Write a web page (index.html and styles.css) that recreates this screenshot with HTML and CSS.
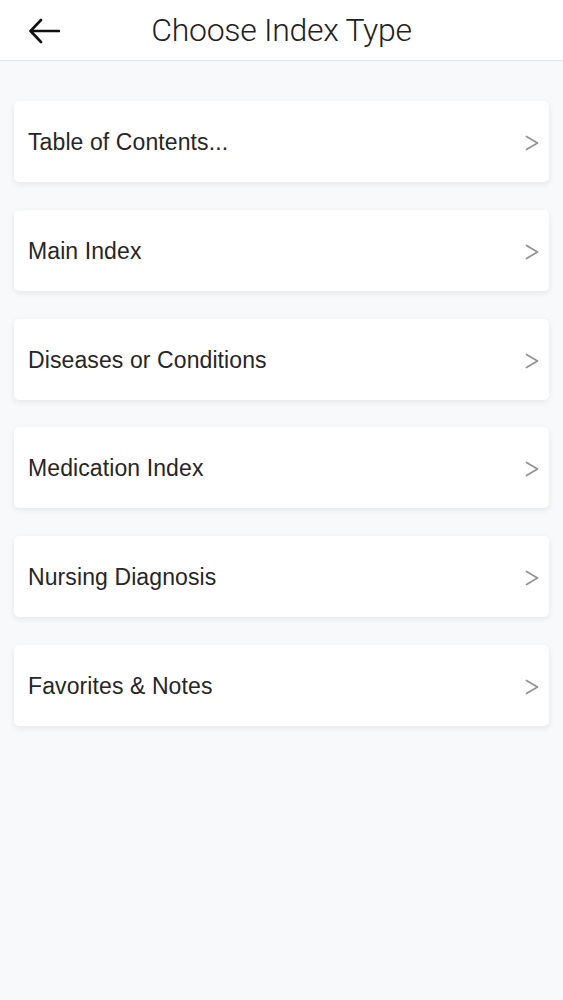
FILE: index.html
```html
<!DOCTYPE html>
<html lang="en">
<head>
  <meta charset="UTF-8" />
  <meta name="viewport" content="width=device-width, initial-scale=1.0"/>
  <title>Choose Index Type</title>
  <link rel="stylesheet" href="styles.css">
</head>
<body>
  <header class="topbar">
    <button class="back" aria-label="Back">
      <svg width="32" height="28" viewBox="0 0 32 28">
        <path d="M31 14H3M13 3L2.5 14L13 25" fill="none" stroke="#111" stroke-width="2.6" stroke-linecap="round" stroke-linejoin="round"/>
      </svg>
    </button>
    <h1>Choose Index Type</h1>
  </header>

  <main class="list">
    <a class="card" href="#">Table of Contents...<svg class="chev" width="14" height="16" viewBox="0 0 14 16"><path d="M1.5 1.5L12.5 8L1.5 14.5"/></svg></a>
    <a class="card" href="#">Main Index<svg class="chev" width="14" height="16" viewBox="0 0 14 16"><path d="M1.5 1.5L12.5 8L1.5 14.5"/></svg></a>
    <a class="card" href="#">Diseases or Conditions<svg class="chev" width="14" height="16" viewBox="0 0 14 16"><path d="M1.5 1.5L12.5 8L1.5 14.5"/></svg></a>
    <a class="card" href="#">Medication Index<svg class="chev" width="14" height="16" viewBox="0 0 14 16"><path d="M1.5 1.5L12.5 8L1.5 14.5"/></svg></a>
    <a class="card" href="#">Nursing Diagnosis<svg class="chev" width="14" height="16" viewBox="0 0 14 16"><path d="M1.5 1.5L12.5 8L1.5 14.5"/></svg></a>
    <a class="card" href="#">Favorites &amp; Notes<svg class="chev" width="14" height="16" viewBox="0 0 14 16"><path d="M1.5 1.5L12.5 8L1.5 14.5"/></svg></a>
  </main>
</body>
</html>
```

FILE: styles.css
```css
body {
  margin: 0;
  font-family: "Liberation Sans", Arial, sans-serif;
  background-color: #f8f9fb;
  color: #222;
  min-height: 1000px;
}
.topbar {
  height: 60px;
  background: #ffffff;
  border-bottom: 1px solid #dfe2e6;
  display: flex;
  align-items: center;
  justify-content: center;
  position: relative;
}
.topbar h1 {
  margin: 0;
  font-family: Roboto, "Liberation Sans", sans-serif;
  font-size: 32px;
  font-weight: 300;
  color: #222;
  letter-spacing: -0.3px;
}
.back {
  position: absolute;
  left: 28px;
  top: 17px;
  background: none;
  border: none;
  padding: 0;
  display: flex;
}
.list {
  display: flex;
  flex-direction: column;
  gap: 27.8px;
  padding: 40px 14px 0 14px;
}
.card {
  display: flex;
  align-items: center;
  justify-content: space-between;
  height: 81px;
  padding: 2px 10px 0 14px;
  box-sizing: border-box;
  background: #ffffff;
  border-radius: 5px;
  box-shadow: 0 2px 6px rgba(0, 0, 0, 0.08);
  color: #262626;
  text-decoration: none;
  font-size: 23px;
  letter-spacing: 0.1px;
}
.chev {
  margin-top: 1px;
}
.chev path {
  fill: none;
  stroke: #929292;
  stroke-width: 1.7;
  stroke-linecap: round;
  stroke-linejoin: round;
}
```
